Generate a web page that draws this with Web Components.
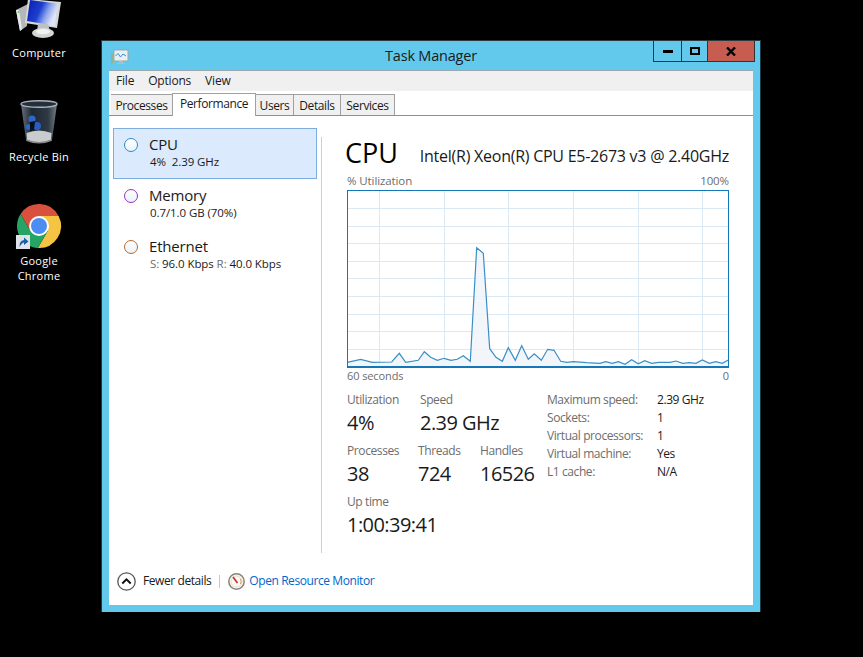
<!DOCTYPE html>
<html><head><meta charset="utf-8"><title>Task Manager</title>
<style>
html,body{margin:0;padding:0;background:#000;height:100%;overflow:hidden}
body{font-family:"Open Sans","Noto Sans",sans-serif;font-size:12px;position:relative;width:863px;height:657px}
</style></head><body>
<desk-icon style="top:-4px;left:1px" label="Computer"><svg width="44" height="44" viewBox="0 0 44 44" style="overflow:visible"><defs><linearGradient id="s" x1="0" x2="1" y1="0" y2=".4"><stop offset="0" stop-color="#0a1cae"/><stop offset=".5" stop-color="#1c3fd0"/><stop offset=".75" stop-color="#8ea4ec"/><stop offset="1" stop-color="#dfe5f8"/></linearGradient></defs><path d="M-1 14 L11 8 L10 30 L3 35 Z" fill="#b4b8b8"/><path d="M-1 14 L3 35 L5 33 L2 14Z" fill="#e8eaea"/><circle cx="1.5" cy="16" r=".9" fill="#5cd05c"/><path d="M11 3 L44 6 L40 32 L8 27 Z" fill="#d6d9d9"/><path d="M13 4 L40 7.5 L38 30 L10 25 Z" fill="url(#s)"/><path d="M21 28 H31 L33 35 H20 Z" fill="#bfc2c2"/><ellipse cx="26" cy="37" rx="11" ry="5" fill="#d4d6d6"/><ellipse cx="26" cy="35.6" rx="7" ry="2.6" fill="#f2f3f3"/></svg></desk-icon>
<desk-icon style="top:100px;left:1px" label="Recycle Bin"><svg width="44" height="44" viewBox="0 0 44 44"><defs><linearGradient id="b" x1="0" x2="1" y1="0" y2="0"><stop offset="0" stop-color="#66717c"/><stop offset=".3" stop-color="#1d2833"/><stop offset=".75" stop-color="#2e3945"/><stop offset="1" stop-color="#747e88"/></linearGradient></defs><path d="M4 4 L9 40 Q22 46 35 40 L40 4 Z" fill="url(#b)"/><ellipse cx="22" cy="4" rx="18" ry="3.3" fill="#23303b" stroke="#aab0b6" stroke-width="1.4"/><path d="M9.5 33 Q22 28 34.5 33 L34 40 Q22 45 10 40Z" fill="#c9cccd"/><path d="M9 39 Q22 45 35 39 L34.6 41 Q22 46 9.4 41Z" fill="#888"/><circle cx="15" cy="19" r="3.6" fill="#2f66cc"/><circle cx="20" cy="26" r="4" fill="#2a5cc0"/><circle cx="11.5" cy="27" r="2.8" fill="#2f66cc"/><path d="M13 22 L18 21 L17 30 L13 31Z" fill="#05101a"/></svg></desk-icon>
<desk-icon style="top:204px;left:1px" lines="Google|Chrome"><svg width="44" height="44" viewBox="0 0 44 44" style="overflow:visible"><path d="M3.54 10.03A22 22 0 0 1 41.6 12H22L13.34 27Z" fill="#d9503f"/><path d="M41.6 12A22 22 0 0 1 20.86 43.97L30.66 27 22 12Z" fill="#f6c443"/><path d="M20.86 43.97A22 22 0 0 1 3.54 10.03L13.34 27H30.66Z" fill="#25a463"/><circle cx="22" cy="22" r="10" fill="#fff"/><circle cx="22" cy="22" r="8" fill="#4d8cf0"/><rect x="-1" y="31" width="14" height="14" fill="#dfe3e8"/><path d="M2.5 43 Q2 37 7 36 V33.5 L11.5 37.5 L7 41 V38.5 Q4.5 39 2.5 43Z" fill="#1c5ea8"/></svg></desk-icon>

<tm-window>
  <tm-menu></tm-menu>
  <tm-tabs></tm-tabs>
  <tm-body>
    <perf-item slot="side" selected color="#2e8bc4" name="CPU">4%&nbsp; 2.39 GHz</perf-item>
    <perf-item slot="side" color="#9b2fc4" name="Memory">0.7/1.0 GB (70%)</perf-item>
    <perf-item slot="side" color="#b96a2c" name="Ethernet"><span style="color:#6d6d6d">S:</span> 96.0 Kbps <span style="color:#6d6d6d">R:</span> 40.0 Kbps</perf-item>
    <cpu-panel slot="main"></cpu-panel>
  </tm-body>
  <tm-footer></tm-footer>
</tm-window>

<script>
const def=(n,html)=>{customElements.define(n,class extends HTMLElement{
  constructor(){super();this.attachShadow({mode:'open'}).innerHTML=typeof html==='function'?html(this):html;}
})};
customElements.define('desk-icon',class extends HTMLElement{
  constructor(){super();this.attachShadow({mode:'open'})}
  connectedCallback(){
    const t=(this.getAttribute('lines')||this.getAttribute('label')).split('|').map(s=>`<div>${s}</div>`).join('');
    this.shadowRoot.innerHTML=`<style>:host{position:absolute;display:flex;flex-direction:column;align-items:center;width:76px;gap:5px;color:#fff;font:11px/15px "Open Sans",sans-serif;text-align:center;letter-spacing:.25px}
    .i{height:44px;width:44px}</style><div class="i"><slot></slot></div><div>${t}</div>`;
  }
});
def('tm-window',`<style>:host{position:absolute;left:101px;top:40px;width:660px;height:572px;box-sizing:border-box;background:#63c9ec;border:1px solid #1c3a46;border-top-color:#2c3a40;display:flex;flex-direction:column;padding:0 7px 7px 7px;color:#1a1a1a;border-bottom:0}
.tb{display:grid;grid-template-columns:1fr auto 1fr;align-items:start;height:29px;flex:none;margin:0 -7px}
.ic{margin:8px 0 0 9px}
.t{font:14.5px/20px "Open Sans",sans-serif;color:#1a1a1a;padding-top:5px;letter-spacing:-.2px}
.btns{justify-self:end;margin-right:5px;display:flex;height:21px;border:1px solid #333;border-top:0;box-sizing:border-box}
.btns div{display:flex;align-items:center;justify-content:center;height:100%}
.min{width:27px;border-right:1px solid #333}.max{width:25px;border-right:1px solid #333}.cl{width:46px;background:#c75c50}
.c{flex:1;display:flex;flex-direction:column;background:#fff;border-top:1px solid #9aa9b0}
</style>
<div class="tb"><svg class="ic" width="18" height="17" viewBox="0 0 18 17"><rect x="0" y="4" width="2" height="10" fill="#8fb38f"/><rect x="3" y="1" width="14" height="11" fill="#e8f0f4" stroke="#9aa6ac"/><path d="M4.5 7 L7 4.5 L9.5 8 L12 5 L15 7" fill="none" stroke="#3b8ccc"/><path d="M8 12h4v2h2v1H6v-1h2z" fill="#b5bcc0"/></svg>
<div class="t">Task Manager</div>
<div class="btns"><div class="min"><svg width="10" height="3"><rect width="10" height="3" fill="#000"/></svg></div><div class="max"><svg width="10" height="8"><rect x="1" y="1" width="8" height="6" fill="none" stroke="#000" stroke-width="2"/></svg></div><div class="cl"><svg width="10" height="9" viewBox="0 0 10 9"><path d="M1 .5 L9 8.5 M9 .5 L1 8.5" stroke="#000" stroke-width="2.4"/></svg></div></div></div>
<div class="c"><slot></slot></div>`);
def('tm-menu',`<style>:host{display:flex;height:20px;background:#f0f0f0;flex:none;font:12px/20px "Open Sans",sans-serif;padding-left:7px;gap:14px;color:#1a1a1a;letter-spacing:-.2px}</style><span>File</span><span>Options</span><span>View</span>`);
def('tm-tabs',`<style>:host{display:flex;align-items:flex-end;height:25px;flex:none;padding-left:2px;border-bottom:1px solid #8a8f98;box-sizing:border-box;font:12px/22px "Open Sans",sans-serif;letter-spacing:-.4px;color:#1a1a1a}
span{box-sizing:border-box;height:21px;background:#f0f0f0;border:1px solid #a0a0a0;border-bottom:0;border-left-width:0;text-align:center}
span:first-child{border-left-width:1px}
.a{height:23px;background:#fff;position:relative;top:1px;border-color:#a0a0a0;border-left-width:1px;line-height:20px;z-index:1}
</style><span style="width:62px">Processes</span><span class="a" style="width:84px;margin-left:-1px">Performance</span><span style="width:38px">Users</span><span style="width:47px">Details</span><span style="width:54px">Services</span>`);
def('tm-body',`<style>:host{display:flex;flex:1;min-height:0}
.side{width:212px;flex:none;box-sizing:border-box;padding:12px 0 0 4px;display:flex;flex-direction:column}
.sep{width:1px;background:#cfcfcf;margin:21px 0 0;flex:none}
.main{flex:1;padding-left:25px}</style><div class="side"><slot name="side"></slot></div><div class="sep"></div><div class="main"><slot name="main"></slot></div>`);
customElements.define('perf-item',class extends HTMLElement{
  constructor(){super();this.attachShadow({mode:'open'})}
  connectedCallback(){const c=this.getAttribute('color');
  this.shadowRoot.innerHTML=`<style>:host{display:grid;grid-template-columns:35px 1fr;width:204px;height:51px;box-sizing:border-box;padding-top:5px;border:1px solid transparent;font-family:"Open Sans",sans-serif;color:#1a1a1a}
  :host([selected]){background:#dbeafc;border-color:#7eaee0}
  .dot{width:14px;height:14px;box-sizing:border-box;border:1.4px solid ${c};border-radius:50%;background:linear-gradient(#fff,#eaf2f8);margin:4px 0 0 10px}
  .n{font-size:15px;line-height:20px;letter-spacing:-.2px}.s{font-size:11.5px;line-height:15px;letter-spacing:-.08px;padding-left:1px}</style>
  <div class="dot"></div><div><div class="n">${this.getAttribute('name')}</div><div class="s"><slot></slot></div></div>`;}
});
def('cpu-graph',el=>{
  const pts="347.3,362.3 360.7,359.3 372.3,362.3 391.7,362 399.3,353.3 405.7,362.3 418.3,360.3 424.3,351.7 430.7,357.3 437.3,360.3 444,358.3 451,360.3 457.3,359.3 463.3,355.7 470.3,361.3 476.7,247.7 483.3,253.3 489.7,348.7 496,357.3 502.3,361.3 508.3,347.7 515.3,360.3 521.7,345.7 528.3,359.3 534.3,353.7 541.3,360.3 547.7,349.3 554,350.3 560.7,361.3 566.7,362.3 573.3,361.7 586.7,362.7 600,363.3 605.7,361.7 612.3,363.3 618.3,361.7 625,364.3 631.7,359.7 638.3,363.7 644.7,360.7 651.7,363.3 658.3,362.3 670,362.3 676,361 682.7,363.3 689.3,362.7 696,363.3 702.3,360 709.3,363.3 715.7,361.7 722.3,363.3 728.3,360".split(' ').map(p=>{const[a,b]=p.split(',');return [(a-347).toFixed(1),(b-190).toFixed(1)]});
  const line=pts.map(p=>p.join(',')).join(' ');
  const hs=[208,226,243,261,278,296,314,331,349].map(y=>`<rect x="0" y="${y-190}" width="382" height="1"/>`).join('');
  const vs=[379,444,508,573,638,702].map(x=>`<rect x="${x-347}" y="0" width="1" height="177"/>`).join('');
  return `<style>:host{display:block;width:382px;height:178px}svg{display:block}</style>
  <svg width="382" height="178" viewBox="0 0 382 178"><g fill="#dbe9f5">${hs}${vs}</g>
  <polygon points="0,176 ${line} 382,176" fill="#f0f5fa" fill-opacity=".85"/>
  <polyline points="${line}" fill="none" stroke="#3a8fc6" stroke-width="1.2"/>
  <rect x=".5" y=".5" width="381" height="176.5" fill="none" stroke="#1478b8"/><rect x="0" y="176" width="382" height="2" fill="#1478b8"/></svg>`;
});
def('stat-block',el=>`<style>:host{display:block;height:46px}
.l{font-size:12px;line-height:18px;color:#6d6d6d;letter-spacing:-.4px}.v{font-size:20px;line-height:28px;color:#1a1a1a;white-space:nowrap;letter-spacing:-.55px}</style>
<div class="l">${el.getAttribute('label')}</div><div class="v">${el.getAttribute('value')}</div>`);
def('info-table',`<style>:host{display:grid;grid-template-columns:110px auto;grid-auto-rows:18px;line-height:18px;font-size:12px;letter-spacing:-.42px}
.k{color:#6d6d6d}.v{color:#1a1a1a}</style>
<span class="k">Maximum speed:</span><span class="v">2.39 GHz</span><span class="k">Sockets:</span><span class="v">1</span><span class="k">Virtual processors:</span><span class="v">1</span><span class="k">Virtual machine:</span><span class="v">Yes</span><span class="k">L1 cache:</span><span class="v">N/A</span>`);
def('cpu-panel',`<style>:host{display:flex;flex-direction:column;width:382px;font-family:"Open Sans",sans-serif}
.h{display:flex;justify-content:space-between;align-items:flex-end;height:54px;margin-left:-2px;box-sizing:border-box}
.big{font-size:27px;line-height:40px;color:#000;margin-bottom:-3px}
.name{font-size:16px;line-height:22px;color:#1a1a1a;letter-spacing:-.25px;white-space:nowrap;margin-bottom:3px}
.ax{display:flex;justify-content:space-between;font-size:11px;line-height:16px;color:#6d6d6d;letter-spacing:-.1px}
.a1{height:20px;font-size:11.5px;line-height:22px;letter-spacing:-.1px}
.a2{height:16px}
.stats{display:grid;grid-template-columns:200px 1fr;margin-top:7px}
.rows{display:flex;flex-direction:column;gap:5px}
.r{display:flex}
</style>
<div class="h"><span class="big">CPU</span><span class="name">Intel(R) Xeon(R) CPU E5-2673 v3 @ 2.40GHz</span></div>
<div class="ax a1"><span>% Utilization</span><span>100%</span></div>
<cpu-graph></cpu-graph>
<div class="ax a2"><span>60 seconds</span><span>0</span></div>
<div class="stats"><div class="rows">
<div class="r"><stat-block style="width:73px" label="Utilization" value="4%"></stat-block><stat-block label="Speed" value="2.39 GHz"></stat-block></div>
<div class="r"><stat-block style="width:71px" label="Processes" value="38"></stat-block><stat-block style="width:62px" label="Threads" value="724"></stat-block><stat-block label="Handles" value="16526"></stat-block></div>
<div class="r"><stat-block label="Up time" value="1:00:39:41"></stat-block></div>
</div><info-table></info-table></div>`);
def('tm-footer',`<style>:host{display:flex;align-items:center;height:52px;box-sizing:border-box;padding-top:4px;flex:none;padding-left:8px;font:12px/16px "Open Sans",sans-serif;letter-spacing:-.42px;color:#1a1a1a}
.s{width:1px;height:13px;background:#c8c8c8;margin:0 8px 0 8px}
a{color:#0066cc;text-decoration:none;margin-left:4px}
.l{margin-left:7px}</style>
<svg width="19" height="19" viewBox="0 0 19 19"><circle cx="9.5" cy="9.5" r="8.7" fill="#fff" stroke="#555" stroke-width="1.3"/><path d="M5.3 11.5 L9.5 7.4 L13.7 11.5" fill="none" stroke="#111" stroke-width="2"/></svg>
<span class="l">Fewer details</span><span class="s"></span>
<svg width="17" height="17" viewBox="0 0 17 17"><circle cx="8.5" cy="8.5" r="7.7" fill="#faf8f4" stroke="#8a8378" stroke-width="1.5"/><circle cx="8.5" cy="8.5" r="5.5" fill="none" stroke="#e8dccb" /><path d="M5 4 L9.5 10" stroke="#c8262c" stroke-width="1.6"/><path d="M12.5 6 A5 5 0 0 1 12.5 11" fill="none" stroke="#e09040"/></svg>
<a>Open Resource Monitor</a>`);
</script>
</body></html>
